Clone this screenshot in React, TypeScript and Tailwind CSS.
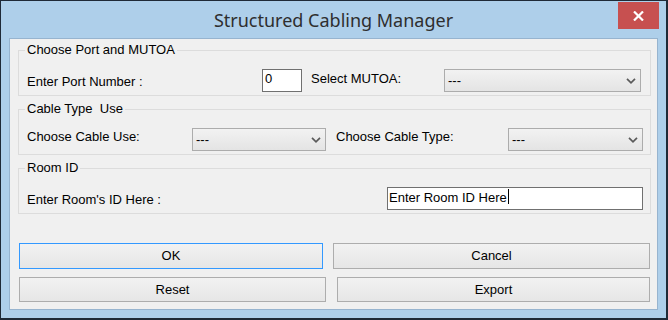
import React from "react";

const Chevron: React.FC = () => (
  <svg width="10" height="6" viewBox="0 0 10 6" className="shrink-0">
    <polyline points="1,0.8 5,4.8 9,0.8" fill="none" stroke="#5a5a5a" strokeWidth="1.7" />
  </svg>
);

interface SelectBoxProps {
  width: string;
  value?: string;
}

const SelectBox: React.FC<SelectBoxProps> = ({ width, value = "---" }) => (
  <div
    className={`${width} h-[23px] shrink-0 flex items-center justify-between border border-[#acacac] bg-gradient-to-b from-[#f2f2f2] to-[#e4e4e4] pl-[3px] pr-[4px] text-[13px] leading-[16px] text-black`}
  >
    <span className="pt-px">{value}</span>
    <Chevron />
  </div>
);

const Group: React.FC<{ title: string; className?: string; children: React.ReactNode }> = ({
  title,
  className = "",
  children,
}) => (
  <fieldset className={`ml-[8px] w-[633px] border border-[#dcdcdc] p-0 pb-[3px] ${className}`}>
    <legend className="ml-[6px] px-[2px] text-[13px] leading-[16px] text-black whitespace-pre">
      {title}
    </legend>
    <div className="flex items-start pt-[11px] pl-[8px]">{children}</div>
  </fieldset>
);

const Btn: React.FC<{ label: string; className: string; focused?: boolean }> = ({
  label,
  className,
  focused,
}) => (
  <button
    className={`${className} flex items-center justify-center border bg-gradient-to-b from-[#f2f2f2] to-[#e6e6e6] text-[13px] leading-[16px] text-black ${
      focused ? "border-[#3399ff]" : "border-[#adadad]"
    }`}
  >
    {label}
  </button>
);

export default function App() {
  return (
    <div className="w-[668px] h-[320px] bg-[#1f2a37] pt-px pl-px font-['Liberation_Sans',Arial,sans-serif]">
      <div className="w-[665px] h-[317px] bg-[#aecfea] flex flex-col">
        {/* title bar */}
        <div className="h-[37px] grid grid-cols-[1fr_auto_1fr] items-start">
          <div />
          <div className="pt-[6px] font-['Noto_Sans',sans-serif] text-[18px] leading-[26px] text-[#2e2e2e] whitespace-nowrap">
            Structured Cabling Manager
          </div>
          <div className="flex justify-end pr-[7px]">
            <div className="mt-px w-[41px] h-[27px] bg-[#c75050] flex items-center justify-center">
              <svg width="11" height="10" viewBox="0 0 11 10">
                <path d="M1 0.5 L10 9.5 M10 0.5 L1 9.5" stroke="#fff" strokeWidth="2.2" />
              </svg>
            </div>
          </div>
        </div>

        {/* client area */}
        <div className="mx-[8px] mb-[8px] flex-1 border border-[#97b4cf] bg-[#f0f0f0] flex flex-col">
          <Group title="Choose Port and MUTOA" className="mt-[3px]">
            <span className="w-[235px] shrink-0 mt-[5px] text-[13px] leading-[16px]">Enter Port Number :</span>
            <div className="w-[40px] h-[23px] shrink-0 border border-[#707070] bg-white pl-[2px] pt-px text-[13px] leading-[16px]">
              0
            </div>
            <span className="ml-[9px] w-[133px] shrink-0 mt-[2px] text-[13px] leading-[16px]">Select MUTOA:</span>
            <SelectBox width="w-[197px]" />
          </Group>

          <Group title="Cable Type  Use" className="mt-[5px]">
            <span className="w-[165px] shrink-0 mt-px text-[13px] leading-[16px]">Choose Cable Use:</span>
            <SelectBox width="w-[134px]" />
            <span className="ml-[10px] w-[172px] shrink-0 mt-px text-[13px] leading-[16px]">Choose Cable Type:</span>
            <SelectBox width="w-[135px]" />
          </Group>

          <Group title="Room ID" className="mt-[5px]">
            <span className="w-[360px] shrink-0 mt-[5px] text-[13px] leading-[16px]">Enter Room's ID Here :</span>
            <div className="w-[256px] h-[23px] shrink-0 flex items-start border border-[#707070] bg-white pl-px pt-[2px] text-[13px] leading-[16px]">
              <span>Enter Room ID Here</span>
              <span className="ml-px mt-[-1px] w-px h-[15px] bg-black" />
            </div>
          </Group>

          <div className="mt-[29px] flex">
            <Btn label="OK" focused className="ml-[9px] w-[304px] h-[26px]" />
            <Btn label="Cancel" className="ml-[10px] w-[317px] h-[26px]" />
          </div>
          <div className="mt-[8px] flex">
            <Btn label="Reset" className="ml-[9px] w-[307px] h-[25px]" />
            <Btn label="Export" className="ml-[11px] w-[313px] h-[25px]" />
          </div>
        </div>
      </div>
    </div>
  );
}
